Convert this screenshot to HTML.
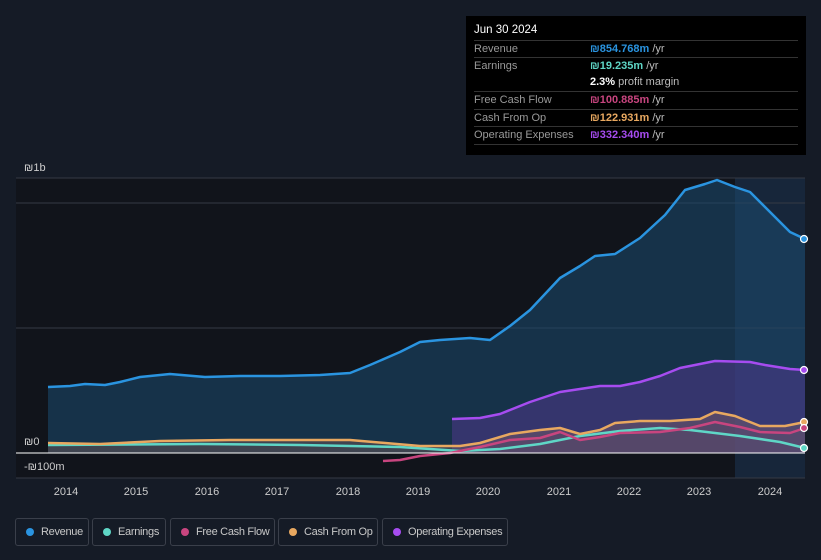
<!DOCTYPE html><html><head><meta charset="utf-8"><style>
html,body{margin:0;width:821px;height:560px;overflow:hidden}
body{background:#151b26;font-family:"Liberation Sans",sans-serif;position:relative}
.tt{position:absolute;left:466px;top:16px;width:340px;height:139px;background:#000;color:#fff;font-size:11px}
.tt .h{position:absolute;left:8px;top:8px;font-size:11.5px}
.row{position:absolute;left:8px;width:324px;border-top:1px solid #333;height:17px;line-height:17px}
.row span.l{color:#999;position:absolute;left:0}
.row span.v{position:absolute;left:116px;font-weight:bold}
.row span.v i{font-style:normal;color:#bbb;font-weight:normal}
.lg{position:absolute;top:518px;height:28px;border:1px solid #3a3f4a;border-radius:3px;color:#c8c8c8;font-size:11px;letter-spacing:-0.3px;line-height:26px;box-sizing:border-box;white-space:nowrap}
.lg b{position:absolute;left:10px;top:9px;width:8px;height:8px;border-radius:50%}
.lg span{position:absolute;left:25px}
</style></head><body>
<svg width="821" height="560" style="position:absolute;left:0;top:0">
<rect x="16" y="178" width="719" height="300" fill="#11141b"/>
<rect x="735" y="178" width="70" height="300" fill="#17263a"/>
<g stroke="#353a44" stroke-width="1"><line x1="16" y1="178" x2="805" y2="178"/><line x1="16" y1="203" x2="805" y2="203"/><line x1="16" y1="328" x2="805" y2="328"/><line x1="16" y1="478" x2="805" y2="478"/></g>
<path d="M48,387 L70,386 85,384 105,385 120,382 140,377 170,374 205,377 240,376 280,376 320,375 350,373 370,365 400,352 420,342 440,340 470,338 490,340 510,326 530,310 560,278 580,266 595,256 615,254 640,238 665,215 685,190 705,184 717,180 735,187 750,192 770,212 790,232 805,239 L805,453 L48,453Z" fill="#1b4a70" fill-opacity="0.55"/>
<path d="M452,419 480,418 500,414 530,402 560,392 580,389 600,386 620,386 640,382 660,376 680,368 700,364 715,361 750,362 765,365 790,369 805,370 L805,453 L452,453Z" fill="#5a3a9a" fill-opacity="0.45"/>
<path d="M48,443 L100,444 160,441 230,440 300,440 350,440 420,446 460,446 480,443 510,434 540,430 560,428 580,434 600,430 615,423 640,421 670,421 700,419 715,412 735,416 760,426 785,426 805,422 L805,453 L48,453Z" fill="#a07060" fill-opacity="0.3"/>
<g fill="none" stroke-width="2.5" stroke-linejoin="round">
<path d="M48,445 L200,444 300,445 400,447 460,451 500,449 540,444 580,436 620,431 660,428 690,430 740,436 780,442 805,448" stroke="#5fd6c6"/>
<path d="M383,461 400,460 420,456 450,453 480,447 510,440 540,438 560,432 580,440 600,437 620,433 660,432 690,428 715,422 740,427 760,432 790,433 805,428" stroke="#c8457f"/>
<path d="M48,443 L100,444 160,441 230,440 300,440 350,440 420,446 460,446 480,443 510,434 540,430 560,428 580,434 600,430 615,423 640,421 670,421 700,419 715,412 735,416 760,426 785,426 805,422" stroke="#e8a860"/>
<path d="M452,419 480,418 500,414 530,402 560,392 580,389 600,386 620,386 640,382 660,376 680,368 700,364 715,361 750,362 765,365 790,369 805,370" stroke="#a64cf0"/>
<path d="M48,387 L70,386 85,384 105,385 120,382 140,377 170,374 205,377 240,376 280,376 320,375 350,373 370,365 400,352 420,342 440,340 470,338 490,340 510,326 530,310 560,278 580,266 595,256 615,254 640,238 665,215 685,190 705,184 717,180 735,187 750,192 770,212 790,232 805,239" stroke="#2a94e0"/>
</g>
<line x1="16" y1="453" x2="805" y2="453" stroke="#fff" stroke-width="1"/>
<g stroke="#fff" stroke-width="1.2"><circle cx="804" cy="239" r="3.5" fill="#2a94e0"/><circle cx="804" cy="370" r="3.5" fill="#a64cf0"/><circle cx="804" cy="422" r="3.5" fill="#e8a860"/><circle cx="804" cy="428" r="3.5" fill="#c8457f"/><circle cx="804" cy="448" r="3.5" fill="#5fd6c6"/></g>
<g fill="#ccc" font-size="11" font-family="Liberation Sans"><text x="24" y="171">₪1b</text><text x="24" y="445">₪0</text><text x="24" y="470">-₪100m</text>
<g text-anchor="middle"><text x="66" y="495">2014</text><text x="136" y="495">2015</text><text x="207" y="495">2016</text><text x="277" y="495">2017</text><text x="348" y="495">2018</text><text x="418" y="495">2019</text><text x="488" y="495">2020</text><text x="559" y="495">2021</text><text x="629" y="495">2022</text><text x="699" y="495">2023</text><text x="770" y="495">2024</text></g></g>
</svg>
<div class="tt"><div class="h">Jun 30 2024</div>
<div class="row" style="top:24px"><span class="l">Revenue</span><span class="v" style="color:#2a94e0">₪854.768m <i>/yr</i></span></div>
<div class="row" style="top:41px"><span class="l">Earnings</span><span class="v" style="color:#5fd6c6">₪19.235m <i>/yr</i></span></div>
<div class="row" style="top:58px;border-top:none"><span class="v" style="color:#fff">2.3% <i>profit margin</i></span></div>
<div class="row" style="top:75px"><span class="l">Free Cash Flow</span><span class="v" style="color:#c8457f">₪100.885m <i>/yr</i></span></div>
<div class="row" style="top:93px"><span class="l">Cash From Op</span><span class="v" style="color:#e8a860">₪122.931m <i>/yr</i></span></div>
<div class="row" style="top:110px"><span class="l">Operating Expenses</span><span class="v" style="color:#a64cf0">₪332.340m <i>/yr</i></span></div>
<div class="row" style="top:128px;height:0"></div>
</div>
<div class="lg" style="left:15px;width:74px"><b style="background:#2a94e0"></b><span>Revenue</span></div>
<div class="lg" style="left:92px;width:74px"><b style="background:#5fd6c6"></b><span>Earnings</span></div>
<div class="lg" style="left:170px;width:105px"><b style="background:#c8457f"></b><span>Free Cash Flow</span></div>
<div class="lg" style="left:278px;width:100px"><b style="background:#e8a860"></b><span>Cash From Op</span></div>
<div class="lg" style="left:382px;width:126px"><b style="background:#a64cf0"></b><span>Operating Expenses</span></div>
</body></html>
